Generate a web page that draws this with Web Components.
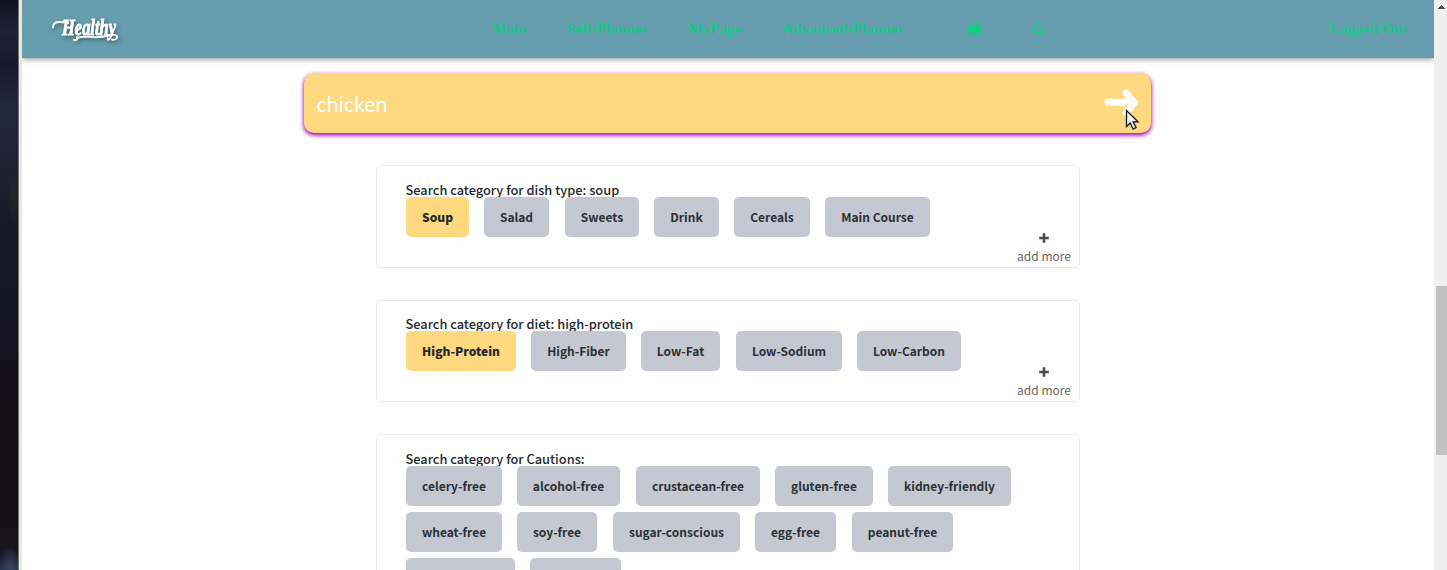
<!DOCTYPE html>
<html lang="en">
<head>
<meta charset="utf-8">
<title>Healthy</title>
<style>
html,body{margin:0;height:570px;overflow:hidden;background:#fff}
body{font-family:"Noto Sans CJK SC","Noto Sans",sans-serif;color:#24292e}
</style>
</head>
<body>
<healthy-app>
  <desktop-edge slot="left"></desktop-edge>
  <site-header slot="header"></site-header>
  <search-field slot="main">chicken</search-field>
  <category-card slot="main" style="height:103px;margin-bottom:32px" label="Search category for dish type: soup" more>
    <tag-chip active w="63">Soup</tag-chip><tag-chip w="65" gap="16">Salad</tag-chip><tag-chip w="74">Sweets</tag-chip><tag-chip w="65">Drink</tag-chip><tag-chip w="76">Cereals</tag-chip><tag-chip w="105">Main Course</tag-chip>
  </category-card>
  <category-card slot="main" style="height:102px;margin-bottom:32px;--shift:-1px" label="Search category for diet: high-protein" more>
    <tag-chip active w="110">High-Protein</tag-chip><tag-chip w="95">High-Fiber</tag-chip><tag-chip w="79" gap="16">Low-Fat</tag-chip><tag-chip w="106">Low-Sodium</tag-chip><tag-chip w="104">Low-Carbon</tag-chip>
  </category-card>
  <category-card slot="main" style="height:200px" label="Search category for Cautions:">
    <tag-chip w="96">celery-free</tag-chip><tag-chip w="103" gap="16">alcohol-free</tag-chip><tag-chip w="124">crustacean-free</tag-chip><tag-chip w="98">gluten-free</tag-chip><tag-chip w="123">kidney-friendly</tag-chip>
    <tag-chip w="96">wheat-free</tag-chip><tag-chip w="80" gap="16">soy-free</tag-chip><tag-chip w="127">sugar-conscious</tag-chip><tag-chip w="81" gap="16">egg-free</tag-chip><tag-chip w="101" gap="60">peanut-free</tag-chip>
    <tag-chip w="109"></tag-chip><tag-chip w="91"></tag-chip>
  </category-card>
  <scroll-rail slot="right"></scroll-rail>
</healthy-app>
<script>
const define=(name,html,setup)=>customElements.define(name,class extends HTMLElement{
  connectedCallback(){
    if(this.shadowRoot)return;
    this.attachShadow({mode:"open"}).innerHTML=html;
    if(setup)setup(this,this.shadowRoot);
  }
});
define("healthy-app",`<style>
:host{display:grid;grid-template-columns:22px 1412px 13px;height:570px;overflow:hidden}
.page{display:flex;flex-direction:column;height:570px;overflow:hidden;background:#fff}
.main{display:flex;flex-direction:column;align-items:flex-start;padding-top:15px}
</style><slot name="left"></slot><div class="page"><slot name="header"></slot><div class="main"><slot name="main"></slot></div></div><slot name="right"></slot>`);
define("desktop-edge",`<style>
:host{display:block;box-sizing:border-box;height:570px;border-right:3px solid #e6e7e8;background:
linear-gradient(90deg,transparent 18px,#77736f 18px),
radial-gradient(ellipse 6px 30px at 14px 195px,#25242b,transparent),
radial-gradient(ellipse 12px 22px at 10px 568px,#34435f,transparent),
linear-gradient(#12121f 0,#1d2334 30px,#181a29 65px,#20293d 105px,#1d2332 155px,#1c1f29 190px,#171925 235px,#141521 300px,#14111c 380px,#140f15 440px,#171115 520px,#171722 555px,#25304a 570px)}
</style>`);
define("scroll-rail",`<style>
:host{display:flex;flex-direction:column;height:570px;background:#f0f0f0}
svg{display:block;margin:5px 0 0 4px}
.thumb{width:11px;height:169px;margin:277px 0 0 2px;background:#c1c1c1}
</style><svg width="7" height="4" shape-rendering="crispEdges"><path d="M3 0h1v1h1v1h1v1h1v1H0V3h1V2h1V1h1z" fill="#505050"/></svg><div class="thumb"></div>`);
define("site-header",`<style>
:host{display:grid;grid-template-columns:469.500px 1fr auto;flex:none;height:58px;background:#669eaf;box-shadow:0 2px 5px rgba(0,0,0,.35);position:relative;font-family:"Liberation Serif",serif;font-weight:700;font-size:15.300px;line-height:58px;color:#17ca86}
.logo{display:block;overflow:visible;margin:10px 0 0 26px;filter:drop-shadow(1px 2px 2px rgba(0,0,0,.4))}
nav{display:flex;white-space:nowrap}
nav span{flex:none}
svg{flex:none}
.out{padding-right:27px;white-space:nowrap}
</style>
<svg class="logo" width="90" height="40" viewBox="0 0 90 40"><text x="14" y="25" textLength="54" lengthAdjust="spacingAndGlyphs" font-family="Liberation Serif,serif" font-style="italic" font-weight="700" font-size="23" fill="#fff" stroke="#fff" stroke-width=".9">Healthy</text><path d="M5 17.500C5 11 11 11.500 20 13M29 28C37 24 47 30 60 25.500C72 22 71 31 64 29.500M29 27q1 4-3 3" fill="none" stroke="#fff" stroke-width="2" stroke-linecap="round"/></svg>
<nav><span style="width:75px">Main</span><span style="width:121px">Self-Planner</span><span style="width:94px">MyPage</span><span style="width:185px">Advanced-Planner</span>
<svg width="15" height="15" viewBox="0 0 15 15" style="margin-top:21px"><path d="M.7 4.5h2.7v1.4h1V4.5h6v1.4h1V4.5h2.8l.6 7H0zM0 12.2h15v2.3H0z" fill="#10cf82"/><path d="M4 5.8V4c0-4.500 7-4.500 7 0v1.800" fill="none" stroke="#10cf82" stroke-width="1"/></svg>
<svg width="12" height="12" viewBox="0 0 12 12" style="margin:24px 0 0 51px"><circle cx="4.900" cy="4.900" r="4" fill="none" stroke="#10cf82" stroke-width="1.800"/><path d="M8 8l2.300 2.300" stroke="#10cf82" stroke-width="2" stroke-linecap="round"/></svg></nav>
<span class="out">Logged Out</span>`);
define("search-field",`<style>
:host{display:flex;box-sizing:border-box;justify-content:space-between;width:847px;height:60px;margin:0 0 32px 282.400px;padding:0 12px;border-radius:10px;background:#ffd980;box-shadow:0 2px 5px #ad0fc0,0 2px 3px rgba(173,15,192,.5);color:#fff;font:21.4px/62px Lato,sans-serif;position:relative}
.arrow{margin-top:16px}
.pointer{position:absolute;left:821px;top:36px}
</style><span><slot></slot></span><svg class="arrow" width="35" height="28" viewBox="0 0 35 28"><path d="M4 13.300h25M22 4l8.500 9.800-8.500 9.800" fill="none" stroke="#fff" stroke-width="7" stroke-linecap="round" stroke-linejoin="round"/></svg>
<svg class="pointer" width="15" height="22" viewBox="0 0 15 22"><path d="M1.500 1.500v16l3.700-3.500 3 6 2.900-1.500-3-5.700h4.900z" fill="#f6f6f6" stroke="#111" stroke-width="1.300"/></svg>`);
define("category-card",`<style>
:host{display:block;position:relative;box-sizing:border-box;flex:none;width:704px;margin-left:354px;border:1px solid #ebebeb;border-radius:5px;padding:calc(15px + var(--shift,0px)) 0 0 29px;background:#fff}
.title{height:16px;font-size:12.800px;font-weight:500;line-height:18px;white-space:nowrap;text-indent:-.5px}
.chips{display:flex;flex-wrap:wrap;row-gap:6px;width:645px;position:relative}
.more{position:absolute;right:8px;bottom:1px;display:flex;flex-direction:column;align-items:center;gap:3px;font-size:12px;line-height:20px;color:#686868}
</style><div class="title"></div><div class="chips"><slot></slot></div>`,(host,root)=>{
  root.querySelector(".title").textContent=host.getAttribute("label");
  if(host.hasAttribute("more"))root.innerHTML+=`<div class="more"><svg width="10" height="10" viewBox="0 0 10 10"><path d="M5 .2v9.600M.2 5h9.600" stroke="#4b4b4b" stroke-width="2.600"/></svg><span>add more</span></div>`;
});
define("tag-chip",`<style>
:host{display:block;box-sizing:border-box;flex:none;height:40px;border-radius:5px;background:#c5c8d0;color:#2c3038;font-size:12px;font-weight:700;line-height:39px;text-align:center;white-space:nowrap}
:host([active]){background:#ffd980;color:#25292c;font-weight:900}
</style><slot></slot>`,host=>{
  host.style.width=host.getAttribute("w")+"px";
  host.style.marginRight=(host.getAttribute("gap")||15)+"px";
});
</script>
</body>
</html>
